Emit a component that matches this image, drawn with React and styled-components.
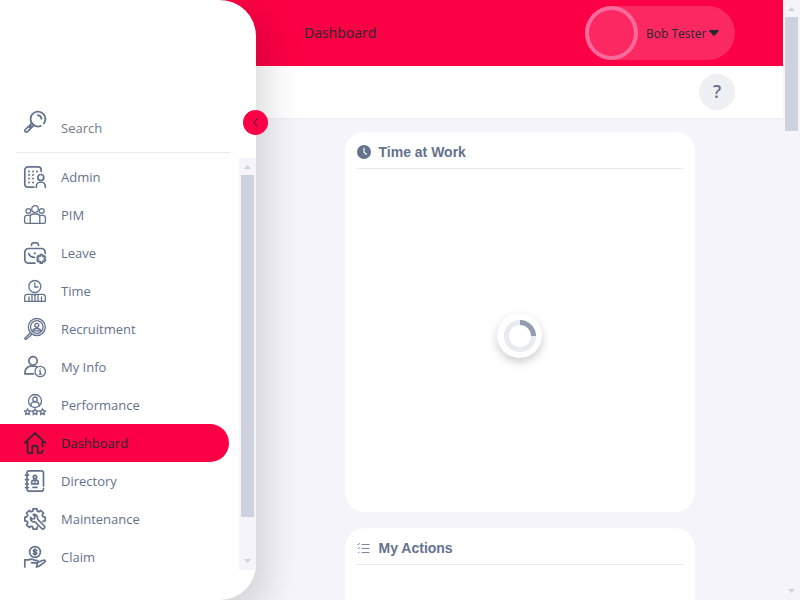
import React from "react";
import styled, { createGlobalStyle, css } from "styled-components";

const red = "#fb0044";
const slate = "#64728c";
const ink = "#232a30";
const surface = "#f5f4fa";
const thumb = "#ced2de";

const GlobalStyle = createGlobalStyle`
  *, *::before, *::after { box-sizing: border-box; }
  body { margin: 0; overflow: hidden; background: ${surface}; font-family: "Open Sans", "Noto Sans", sans-serif; color: ${slate}; }
  button, input { font: inherit; }
`;

const Page = styled.div`
  display: grid;
  grid-template-columns: 256px minmax(0, 1fr) 17px;
  grid-template-rows: 66px 52px minmax(0, 1fr);
  height: 100vh;
  overflow: hidden;
`;

const Sidebar = styled.aside`
  position: relative;
  z-index: 2;
  grid-column: 1;
  grid-row: 1 / -1;
  display: flex;
  flex-direction: column;
  padding: 108px 0 30px;
  background: #fff;
  border-radius: 0 36px 36px 0;
  box-shadow: 10px 14px 36px rgba(0, 0, 0, 0.15);
`;

const SearchRow = styled.label`
  display: flex;
  align-items: flex-start;
  gap: 15px;
  height: 45px;
  margin: 0 26px 5px 16px;
  padding: 3px 0 0 8px;
  border-bottom: 1px solid #e8eaef;
`;

const SearchInput = styled.input`
  flex: 1;
  min-width: 0;
  margin-top: 5px;
  padding: 0;
  border: 0;
  outline: 0;
  background: transparent;
  color: ${slate};
  font-size: 13px;
  line-height: 24px;
  &::placeholder { color: #747b88; opacity: 1; }
`;

const NavArea = styled.nav`
  display: flex;
  flex: 1;
  min-height: 0;
`;

const NavList = styled.ul`
  flex: 1;
  margin: 0;
  padding: 0 10px 0 0;
  overflow: hidden;
  list-style: none;
`;

const NavLink = styled.a`
  display: flex;
  align-items: center;
  gap: 15px;
  height: 38px;
  padding-left: 24px;
  border-radius: 0 19px 19px 0;
  color: ${slate};
  font-size: 13px;
  font-weight: 500;
  text-decoration: none;
  ${(p) => p.$active && css`
    background: ${red};
    color: ${ink};
  `}
`;

const Icon = styled.svg`
  display: block;
  flex: none;
  width: 22px;
  height: 22px;
  overflow: visible;
  fill: none;
  stroke: currentColor;
  stroke-width: ${(p) => p.$weight};
  stroke-linecap: round;
  stroke-linejoin: round;
`;

const Collapse = styled.button`
  position: absolute;
  top: 110px;
  right: -12px;
  display: grid;
  place-items: center;
  width: 25px;
  height: 25px;
  padding: 0;
  border: 0;
  border-radius: 50%;
  background: ${red};
  color: ${ink};
`;

const TopBar = styled.header`
  grid-column: 1 / 3;
  grid-row: 1;
  display: flex;
  align-items: center;
  justify-content: space-between;
  padding: 0 48px 0 304px;
  background: ${red};
  color: ${ink};
`;

const Title = styled.h1`
  margin: 0;
  font-size: 14px;
  font-weight: 400;
  line-height: 20px;
`;

const UserMenu = styled.button`
  display: flex;
  align-items: center;
  width: 150px;
  height: 54px;
  padding: 0;
  border: 0;
  border-radius: 27px;
  background: #fc2862;
  color: ${ink};
  font-size: 12px;
  text-align: left;
`;

const Avatar = styled.span`
  width: 53px;
  height: 54px;
  margin-right: 8px;
  border: 4px solid #f76a9b;
  border-radius: 50%;
`;

const Caret = styled.svg`
  width: 10px;
  height: 6px;
  margin-left: 3px;
  fill: currentColor;
`;

const SubBar = styled.div`
  grid-column: 1 / 3;
  grid-row: 2;
  display: flex;
  align-items: center;
  justify-content: flex-end;
  padding-right: 48px;
  background: #fff;
  box-shadow: 0 1px 1px #eeedf2;
`;

const Help = styled.button`
  width: 36px;
  height: 36px;
  padding: 0 0 2px;
  border: 0;
  border-radius: 50%;
  background: #eff0f3;
  color: ${slate};
  font-size: 18px;
  font-weight: 600;
`;

const Content = styled.main`
  grid-column: 2;
  grid-row: 3;
  display: flex;
  flex-direction: column;
  align-items: center;
  gap: 16px;
  padding: 14px 16px 0;
  overflow: hidden;
`;

const Card = styled.section`
  display: flex;
  flex: none;
  flex-direction: column;
  width: 100%;
  max-width: 350px;
  height: 380px;
  padding: 12px;
  border-radius: 20px;
  background: #fff;
`;

const CardHeader = styled.header`
  display: flex;
  align-items: center;
  gap: 8px;
  height: 25px;
  padding-bottom: 8px;
  border-bottom: 1px solid #e7e7ed;
`;

const CardTitle = styled.h2`
  margin: 0;
  font: bold 14px/16px "Liberation Sans", Arial, sans-serif;
`;

const CardIcon = styled.svg`
  flex: none;
  width: 14px;
  height: 14px;
  overflow: visible;
`;

const CardBody = styled.div`
  display: grid;
  flex: 1;
  place-items: center;
  padding-top: 2px;
`;

const Spinner = styled.div`
  display: grid;
  place-items: center;
  width: 45px;
  height: 45px;
  border-radius: 50%;
  background: #fff;
  box-shadow: 0 4px 10px rgba(0, 0, 0, 0.2);
`;

const Track = styled.div`
  grid-column: ${(p) => (p.$page ? 3 : "auto")};
  grid-row: ${(p) => (p.$page ? "1 / -1" : "auto")};
  display: flex;
  flex: none;
  flex-direction: column;
  align-items: center;
  width: 17px;
  background: ${surface};
  color: ${thumb};
`;

const Rail = styled.div`
  flex: 1;
  width: 13px;
`;

const Thumb = styled.div`
  height: ${(p) => p.$share}%;
  background: ${thumb};
`;

const Arrow = styled.svg`
  width: 17px;
  height: 17px;
  fill: currentColor;
`;

function Scrollbar({ page, share }) {
  return (
    <Track $page={page} aria-hidden="true">
      <Arrow viewBox="0 0 17 17"><path d="M5 11h7L8.500 7z" /></Arrow>
      <Rail><Thumb $share={share} /></Rail>
      <Arrow viewBox="0 0 17 17"><path d="M5 6h7L8.500 10z" /></Arrow>
    </Track>
  );
}

const star = (x) =>
  `M${x} 14.800l.9 2 2.200.2-1.700 1.500.5 2.200-1.900-1.200-1.900 1.200.5-2.200-1.700-1.500 2.200-.2z`;

// Outline of a cogwheel; it starts after the lower right tooth, so that tooth can be left out.
function gear(cx, cy, teeth, inner, outer, count) {
  const step = 360 / teeth;
  const point = (radius, degrees) => {
    const angle = (degrees * Math.PI) / 180;
    return `${(cx + radius * Math.cos(angle)).toFixed(2)} ${(cy + radius * Math.sin(angle)).toFixed(2)}`;
  };
  const parts = [];
  for (let i = 0; i < count; i += 1) {
    const middle = 90 + i * step;
    parts.push(
      point(inner, middle - step * 0.36),
      point(outer, middle - step * 0.24),
      point(outer, middle + step * 0.24),
      point(inner, middle + step * 0.36)
    );
  }
  return `M${parts.join("L")}${count === teeth ? "z" : ""}`;
}

const drawings = {
  Search: (
    <>
      <path d="M19.800 12.600A7.400 7.400 0 1 0 16.800 14.900" />
      <path d="M13.800 4.100a4.200 4.200 0 0 1 3.700 3.700" />
      <path d="M8 12.200 1.300 18.500a1.500 1.500 0 0 0 2.200 2.200L10 14.200M5.500 16.500l1.600-1.600" />
    </>
  ),
  Admin: (
    <>
      <path d="M9.800 21.200H4a3.200 3.200 0 0 1-3.200-3.200V4A3.200 3.200 0 0 1 4 .8h10A3.200 3.200 0 0 1 17.200 4v1.500" />
      <circle cx="16.800" cy="11.500" r="3" />
      <path d="M12.300 21.300v-.8a4.500 4.500 0 0 1 9 0v.8" />
      <path strokeWidth="2" d="M5 5.500h.01M9 5.500h.01M13 5.500h.01M5 9h.01M9 9h.01M5 12.500h.01M9 12.500h.01M5 16.500h.01M9 16.500h.01" />
    </>
  ),
  PIM: (
    <>
      <circle cx="11" cy="5" r="3.300" />
      <circle cx="4.300" cy="7" r="2.400" />
      <circle cx="17.700" cy="7" r="2.400" />
      <path d="M6.200 19.300V13a3 3 0 0 1 3-3h3.600a3 3 0 0 1 3 3v6.300z" />
      <path d="M5.500 11.300H3a2.400 2.400 0 0 0-2.400 2.400v4.200c0 .8.6 1.400 1.400 1.400h4M16.500 11.300H19a2.400 2.400 0 0 1 2.400 2.400v4.200c0 .8-.6 1.400-1.400 1.400h-4" />
    </>
  ),
  Leave: (
    <>
      <path d="M7.500 3.300V3A2.200 2.200 0 0 1 9.700.8h2.600A2.200 2.200 0 0 1 14.500 3v.3" />
      <path d="M11 21.200H4.500A3.700 3.700 0 0 1 .8 17.500v-7.300a3.700 3.700 0 0 1 3.700-3.700h13a3.700 3.700 0 0 1 3.700 3.700v1" />
      <path d="M4.800 11.500c.6 2.700 2.700 3.800 5.700 3.800" />
      <path strokeWidth="2.200" d="M10.900 11.300h.01" />
      <path d={gear(17.3, 16.8, 6, 3, 4.400, 6)} />
    </>
  ),
  Time: (
    <>
      <circle cx="10.800" cy="6.500" r="6" />
      <path d="M10.800 3v4H14" />
      <path d="M.7 21.300v-4.500a2.500 2.500 0 0 1 2.500-2.500h15.600a2.500 2.500 0 0 1 2.500 2.500v4.500zM5 17v4M8 14.500V21M14 14.500V21M17.500 17v4M10 14.500l1 1.500 1-1.500M11 16v5" />
    </>
  ),
  Recruitment: (
    <>
      <circle cx="12.800" cy="9" r="8.500" />
      <circle cx="12.800" cy="9" r="6.300" />
      <circle cx="12.800" cy="7.300" r="2" />
      <path d="M8.800 12.800c.5-3.100 7.500-3.100 8 0z" />
      <path d="M6.500 14.800 1 20a.9.9 0 0 0 1.200 1.300L8 16.300" />
    </>
  ),
  "My Info": (
    <>
      <circle cx="9" cy="4.800" r="4.200" />
      <path d="M9.500 17.800H.8c0-4.300 1.700-7 5.500-7.700h4.200c.8.1 1.500.3 2.100.7" />
      <circle cx="16.200" cy="15.500" r="5.200" strokeWidth="1.300" />
      <path strokeWidth="1.300" d="M16.200 12.800h.01M15.400 15h.9v3M15.200 18.200h2.200" />
    </>
  ),
  Performance: (
    <>
      <circle cx="11" cy="7" r="6.500" />
      <circle cx="11" cy="5.300" r="2.300" />
      <path d="M7 12v-1.300A2.500 2.500 0 0 1 9.500 8.200h3a2.500 2.500 0 0 1 2.500 2.500V12" />
      <path d={star(3.500) + star(11) + star(18.500)} />
    </>
  ),
  Dashboard: (
    <path d="M.8 10.800 11 1l10.200 9.800M3.500 9v10.200c0 1.100.7 1.800 1.800 1.800h2.900v-5.500c0-1 .7-1.700 1.700-1.700h2.200c1 0 1.700.7 1.700 1.700V21h2.900c1.100 0 1.800-.7 1.800-1.800v-.7M18.500 9v5.500" />
  ),
  Directory: (
    <>
      <path d="M3 4V3A2.200 2.200 0 0 1 5.200.8h11.600A2.200 2.200 0 0 1 19.500 3v13M19.500 18.500v.5a2.200 2.200 0 0 1-2.200 2.200H5.200A2.200 2.200 0 0 1 3 19v-1M3 6.500v2M3 11v2M3 15v1.500M1.500 5.200h3M1.500 9.700h3M1.500 14h3M1.500 17.500h3" />
      <circle cx="11" cy="7" r="1.700" />
      <path d="M7.700 13.800v-1.300A2.300 2.300 0 0 1 10 10.200h2a2.300 2.300 0 0 1 2.300 2.300v1.300zM11 11.500v.5M9 17.300h4" />
    </>
  ),
  Maintenance: (
    <>
      <path d={gear(11, 11, 8, 8.200, 10.300, 7)} />
      <path d="M9.200 6.500 11 8.300l-.5 2.200-2.200.5-1.800-1.700c-.5 3 1.700 5.100 4.500 4.500l6.700 6.700c1.800 1.400 4-.7 2.700-2.500l-6.700-6.700c.4-3-1.600-5.100-4.500-4.800z" />
    </>
  ),
  Claim: (
    <>
      <circle cx="11" cy="6" r="5.400" />
      <path d="M12.800 4.500c-.7-1-3.400-.9-3.400.4 0 1.500 3.400.8 3.400 2.400 0 1.300-2.800 1.300-3.500.3M11 3v6" />
      <path d="M.8 21V13.800h3.500l3.200-.6c1.400 0 2.200.9 3.500 1.100h1.700c1.800 0 1.800 2.500 0 2.500H7.500M13.800 16.200l5.500-2c1.800-.5 2.700 1 1.400 1.900l-5.800 4.200c-.8.500-1.500.7-2.500.7z" />
    </>
  ),
};

const detailed = ["PIM", "Time", "Recruitment", "Performance"];
const items = ["Admin", "PIM", "Leave", "Time", "Recruitment", "My Info", "Performance", "Dashboard", "Directory", "Maintenance", "Claim"];

function MenuIcon({ name }) {
  return (
    <Icon viewBox="0 0 22 22" $weight={detailed.includes(name) ? 1.3 : 1.7} aria-hidden="true">
      {drawings[name]}
    </Icon>
  );
}

export default function App() {
  return (
    <>
      <GlobalStyle />
      <Page>
        <Sidebar>
          <SearchRow>
            <MenuIcon name="Search" />
            <SearchInput type="text" placeholder="Search" aria-label="Search" />
          </SearchRow>
          <NavArea aria-label="Main menu">
            <NavList>
              {items.map((name) => (
                <li key={name}>
                  <NavLink href="#" $active={name === "Dashboard"} aria-current={name === "Dashboard" ? "page" : undefined}>
                    <MenuIcon name={name} />
                    {name}
                  </NavLink>
                </li>
              ))}
            </NavList>
            <Scrollbar share={90.5} />
          </NavArea>
          <Collapse type="button" aria-label="Collapse menu">
            <svg width="5" height="9" viewBox="0 0 5 9" fill="none" stroke="currentColor"><path d="M4.500.5.8 4.500l3.700 4" /></svg>
          </Collapse>
        </Sidebar>

        <TopBar>
          <Title>Dashboard</Title>
          <UserMenu type="button">
            <Avatar />
            Bob Tester
            <Caret viewBox="0 0 10 6"><path d="M1 0h8c.9 0 1.200.7.6 1.300L5.700 5.600a1 1 0 0 1-1.400 0L.4 1.300C-.2.7.1 0 1 0z" /></Caret>
          </UserMenu>
        </TopBar>

        <SubBar>
          <Help type="button" aria-label="Help">?</Help>
        </SubBar>

        <Content>
          <Card>
            <CardHeader>
              <CardIcon viewBox="0 0 14 14" aria-hidden="true">
                <circle cx="7" cy="7" r="7" fill={slate} />
                <path d="M7 3v4.300l2.300 2" fill="none" stroke="#fff" strokeWidth="1.200" strokeLinecap="round" />
              </CardIcon>
              <CardTitle>Time at Work</CardTitle>
            </CardHeader>
            <CardBody>
              <Spinner role="status" aria-label="Loading">
                <svg width="32" height="32" viewBox="0 0 32 32" fill="none" strokeWidth="5">
                  <circle cx="16" cy="16" r="13.500" stroke="#e8eaef" />
                  <path d="M16 2.500A13.500 13.500 0 0 1 29.500 16" stroke="#929cae" />
                </svg>
              </Spinner>
            </CardBody>
          </Card>
          <Card>
            <CardHeader>
              <CardIcon viewBox="0 0 14 14" fill="none" stroke="#7d899d" aria-hidden="true">
                <path d="M4.500 3.500H12.500M4.500 7.500H12.500M4.500 11.500H12.500" />
                <path d="m.5 3 .8.8L3 2.200M.5 7l.8.800L3 6.200M1.300 11.500h1" />
              </CardIcon>
              <CardTitle>My Actions</CardTitle>
            </CardHeader>
          </Card>
        </Content>

        <Scrollbar page share={20.2} />
      </Page>
    </>
  );
}
